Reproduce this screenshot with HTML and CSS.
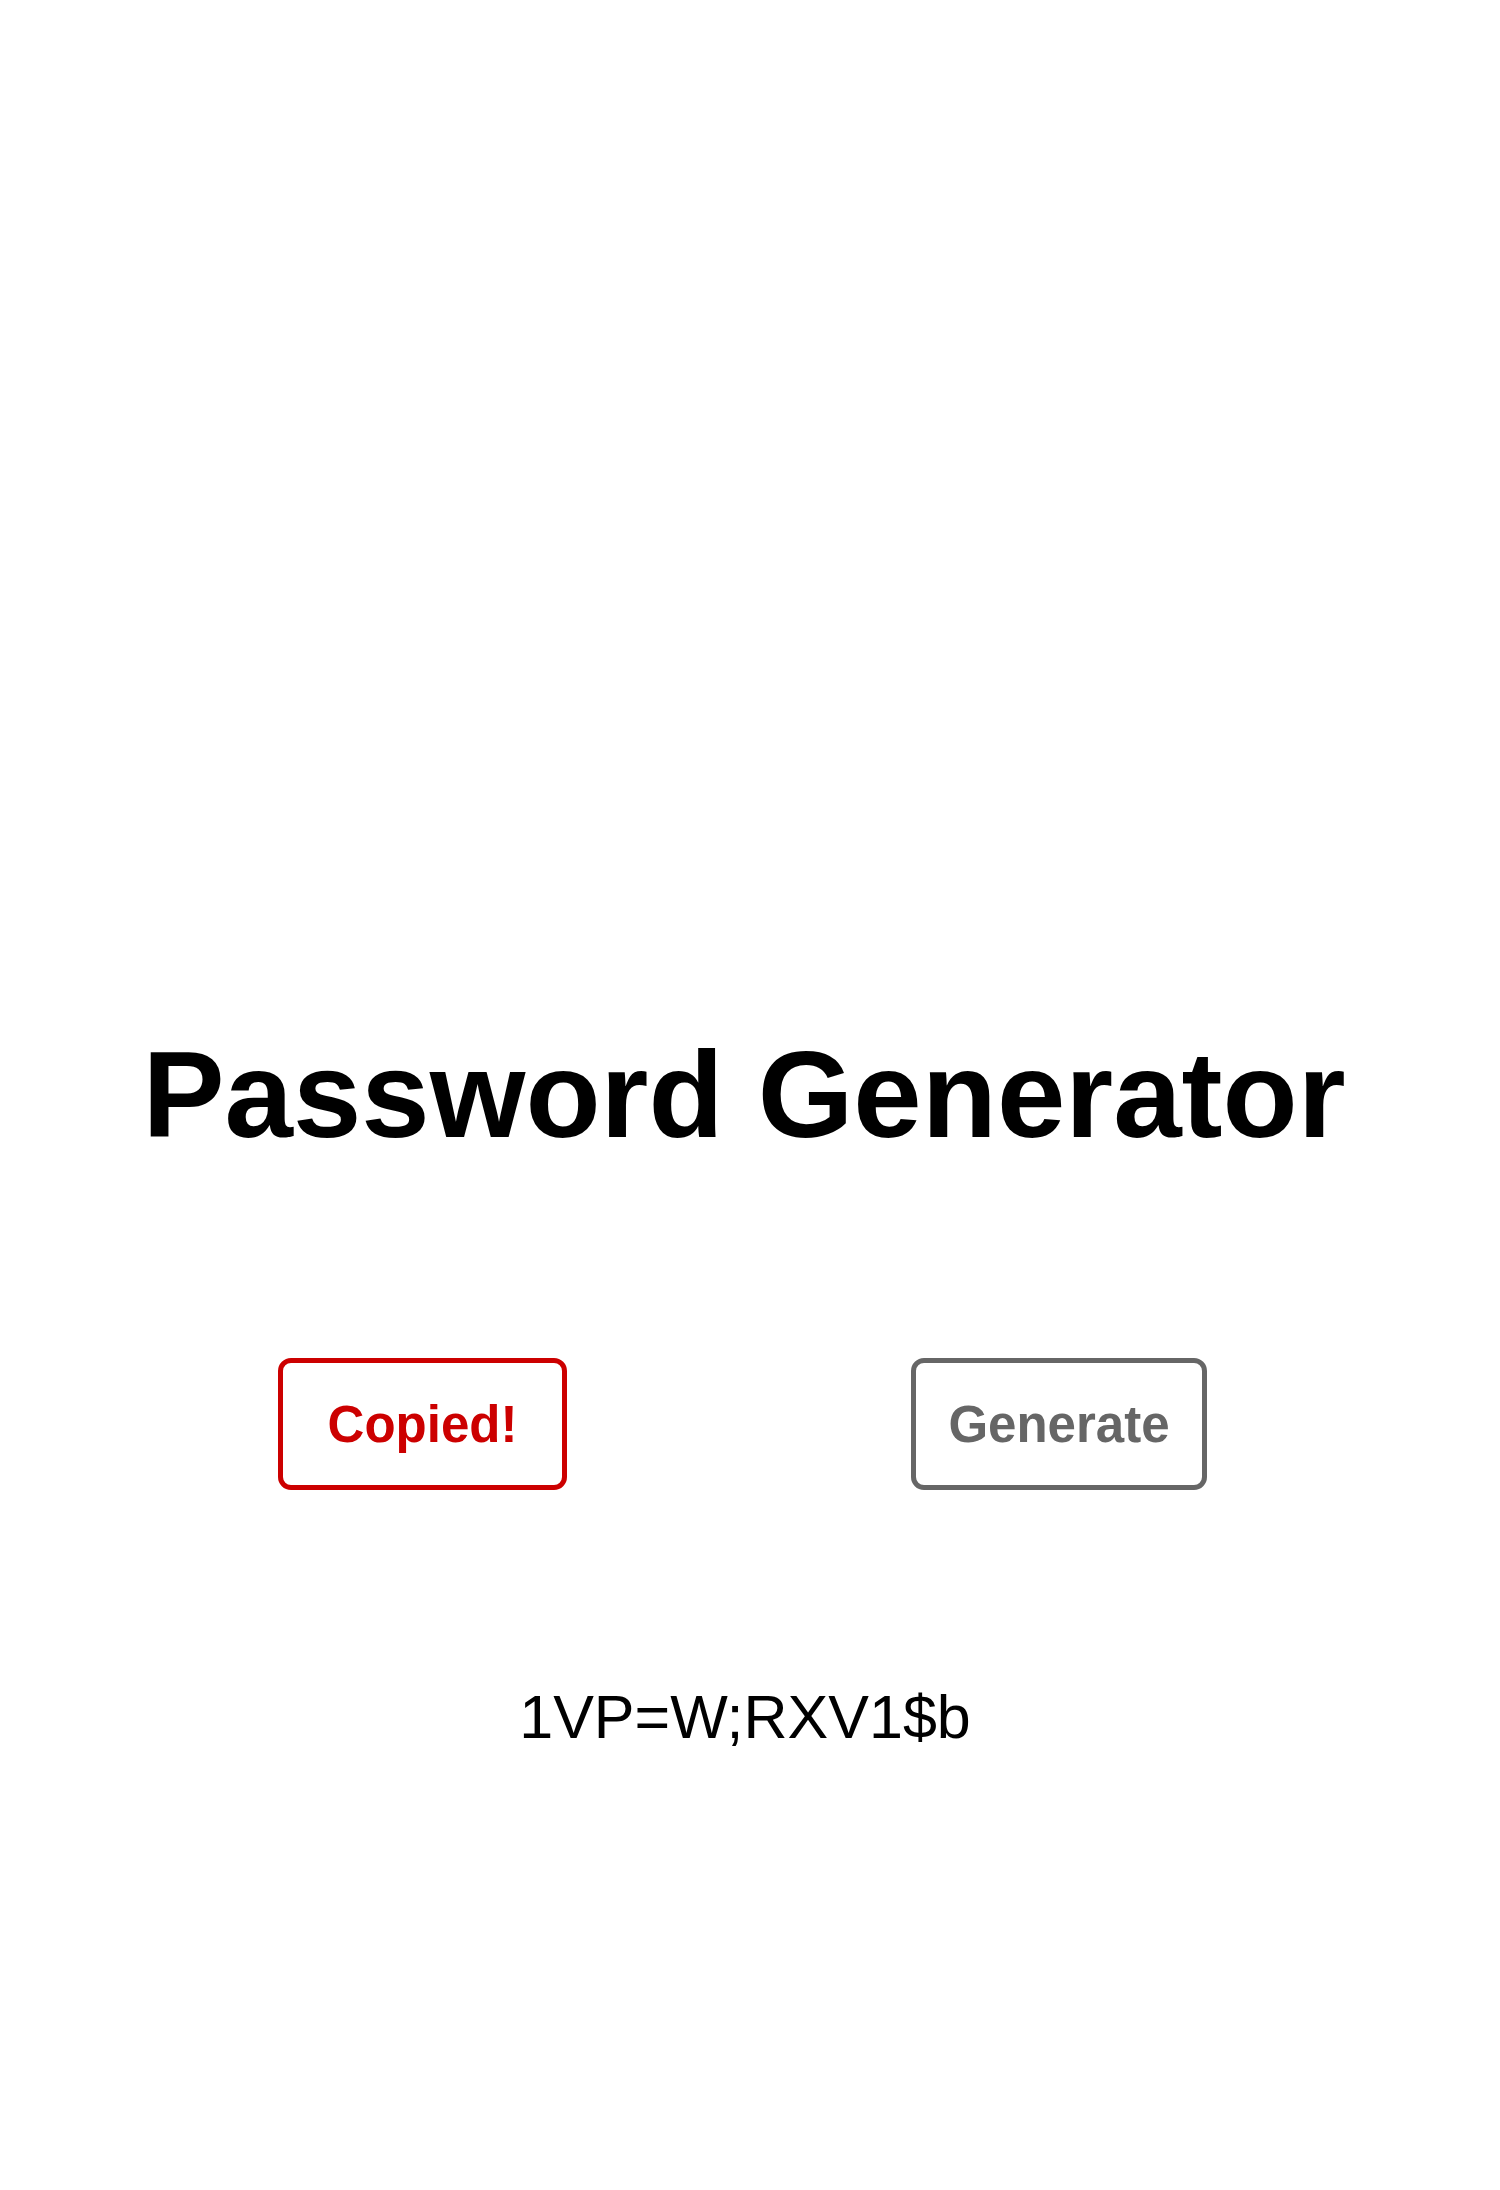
FILE: index.html
```html
<!DOCTYPE html>
<html lang="en">
<head>
<meta charset="utf-8">
<title>Password Generator</title>
<link rel="stylesheet" href="styles.css">
</head>
<body>
<main class="app">
  <h1 class="title">Password Generator</h1>
  <div class="actions">
    <button class="btn btn-copy" type="button">Copied!</button>
    <button class="btn btn-gen" type="button">Generate</button>
  </div>
  <p class="password">1VP=W;RXV1$b</p>
</main>
</body>
</html>
```
FILE: styles.css
```css
html, body {
  margin: 0;
  padding: 0;
  background: #ffffff;
}
body {
  font-family: "Liberation Sans", Arial, Helvetica, sans-serif;
  color: #000;
  width: 1500px;
  min-height: 2190px;
}
.app {
  padding-top: 1033px;
  display: flex;
  flex-direction: column;
}
.title {
  margin: 0;
  font-size: 123px;
  line-height: 123px;
  font-weight: 700;
  text-align: center;
  padding-right: 12px;
}
.actions {
  margin-top: 202px;
  display: flex;
  align-items: center;
  padding-left: 278px;
  gap: 344px;
}
.btn {
  box-sizing: border-box;
  height: 132px;
  background: #fff;
  border: 5px solid;
  border-radius: 13px;
  font-family: "Liberation Sans", Arial, Helvetica, sans-serif;
  font-size: 51px;
  font-weight: 700;
  padding: 0;
  display: flex;
  align-items: center;
  justify-content: center;
}
.btn-copy {
  width: 289px;
  color: #cc0000;
  border-color: #cc0000;
}
.btn-gen {
  width: 296px;
  color: #666666;
  border-color: #666666;
}
.password {
  margin: 197px 0 0;
  font-size: 61px;
  line-height: 61px;
  text-align: center;
  padding-right: 10px;
}
```
